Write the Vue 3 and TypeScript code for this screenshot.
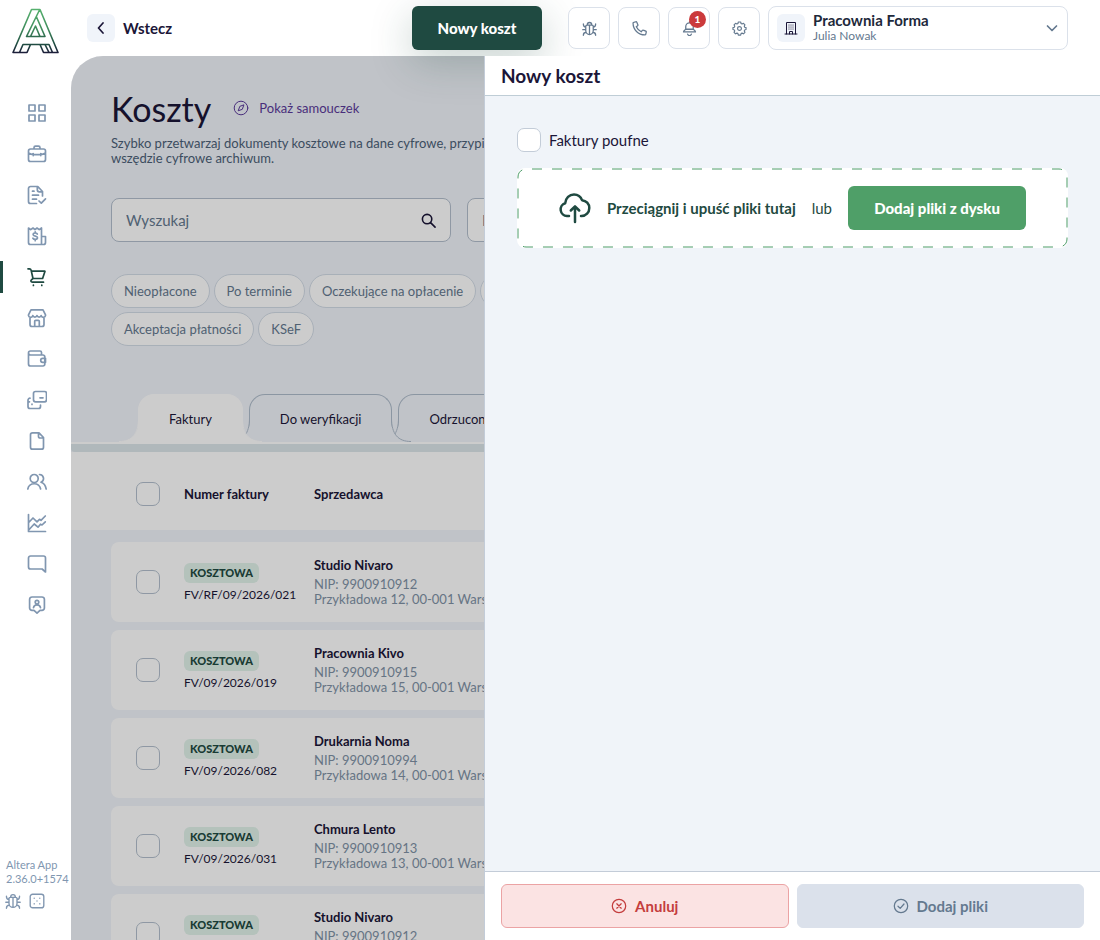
<script setup lang="ts">
import { ref } from 'vue'

interface NavItem { label: string; paths: string; active?: boolean }
interface Invoice { kind: string; number: string; seller: string; nip: string; address: string }

const navItems: NavItem[] = [
  { label: 'Pulpit', paths: 'M2 2h6v6H2z M12 2h6v6h-6z M2 12h6v6H2z M12 12h6v6h-6z' },
  { label: 'Firma', paths: 'M3.5 5h13a2 2 0 0 1 2 2v8.5a2 2 0 0 1-2 2h-13a2 2 0 0 1-2-2V7a2 2 0 0 1 2-2z M7 5V3.7a1.5 1.5 0 0 1 1.5-1.5h3A1.5 1.5 0 0 1 13 3.7V5 M1.5 9c2 1.4 4 1.6 5 1.6h7c1 0 3-.2 5-1.6 M6.2 9.6v2 M13.8 9.6v2' },
  { label: 'Dokumenty', paths: 'M15.5 11V6.5l-4.7-5H3.5a2 2 0 0 0-2 2v13a2 2 0 0 0 2 2H9.5 M10.3 1.8v3a2 2 0 0 0 2 2h3 M5.5 6.2h1.5 M5.5 10.2h6 M5.5 14.2h4 M12 16l2.3 2.2 4.2-4.4' },
  { label: 'Faktury', paths: 'M1.5 16.5V2l2.2 1.6L6 2l2 1.6L10 2l2.2 1.6L14.5 2v16.5h-11a2 2 0 0 1-2-2z M14.5 10.5h4v6a2 2 0 0 1-2 2h-2 M10.3 8c-.5-.8-1.2-1-2.2-1-1.2 0-2 .6-2 1.6 0 2.2 4.4 1 4.4 3.2 0 1-.9 1.6-2.2 1.6-1.1 0-1.9-.4-2.4-1.2 M8.2 5.8V7 M8.2 13.4v1.3' },
  { label: 'Koszty', active: true, paths: 'M1 1.8h1.4c.9 0 1.5.5 1.7 1.3L6 11.5h9.6L18 4.2H4.4 M6 11.5l-1.6 1.3c-1 .9-.5 2.4.9 2.4h11.2 M6.4 18.2v.2 M14.8 18.2v.2' },
  { label: 'Magazyn', paths: 'M4 1.8h12l2.5 5v.8a2.2 2.2 0 0 1-4.3 0 2.2 2.2 0 0 1-4.2 0 2.2 2.2 0 0 1-4.2 0 2.2 2.2 0 0 1-4.3 0v-.8z M3 10v6.5a2 2 0 0 0 2 2h10a2 2 0 0 0 2-2V10 M7.7 18.3v-5a1 1 0 0 1 1-1h2.6a1 1 0 0 1 1 1v5' },
  { label: 'Portfel', paths: 'M1.5 4v11a2 2 0 0 0 2 2H16a1.8 1.8 0 0 0 1.8-1.8V7.8A1.8 1.8 0 0 0 16 6H3.5a2 2 0 0 1 0-4H13a1.5 1.5 0 0 1 1.5 1.5V6 M18.5 9.3h-2.8a2 2 0 0 0 0 4h2.8z' },
  { label: 'Płatności', paths: 'M8.5 1.5h9a2 2 0 0 1 2 2v6.3a2 2 0 0 1-2 2h-9a2 2 0 0 1-2-2V3.5a2 2 0 0 1 2-2z M13 7.8h3 M3 8.2a2 2 0 0 0-2 2v6.3a2 2 0 0 0 2 2h8.5a2 2 0 0 0 2-2v-1.5 M1 11.8h1.5 M5 14.2v.2' },
  { label: 'Pliki', paths: 'M5.5 1.8H12l4.5 4.7v9.7a2 2 0 0 1-2 2h-9a2 2 0 0 1-2-2V3.8a2 2 0 0 1 2-2z M11.5 2v3.5A1.5 1.5 0 0 0 13 7h3.3' },
  { label: 'Kontrahenci', paths: 'M3.2 6.5a4 4 0 1 0 8 0 4 4 0 1 0-8 0 M.8 17a6.5 6.5 0 0 1 12.8 0 M12.5 2.5a4 4 0 0 1 1.5 7.7c2.6.8 4.6 3.2 5.2 6.8' },
  { label: 'Raporty', paths: 'M1.5 1.5v17h17 M1.7 9.5L6 5l4 3.8 2.5-2.5 1.5 1 4.3-4.3 M1.7 17l5.5-6 3.8 3.2 2.5-3 1.5.8 3.3-3.2' },
  { label: 'Wiadomości', paths: 'M3.5 2h13a2 2 0 0 1 2 2v14l-3.4-3H3.5a2 2 0 0 1-2-2V4a2 2 0 0 1 2-2z' },
  { label: 'Konto', paths: 'M5 2h10a2.4 2.4 0 0 1 2.4 2.4V13a2.4 2.4 0 0 1-2.4 2.4h-2L10 18.2l-3-2.8H5A2.4 2.4 0 0 1 2.6 13V4.4A2.4 2.4 0 0 1 5 2z M8.2 7.2a1.8 1.8 0 1 0 3.6 0 1.8 1.8 0 1 0-3.6 0 M6.5 12.6c.3-1.8 1.7-2.8 3.5-2.8s3.2 1 3.5 2.8' },
]

const bug = 'M6.5 5.5h7a1.500 1.500 0 0 1 1.500 1.500V13a5 5 0 0 1-10 0V7a1.500 1.500 0 0 1 1.500-1.500z M7 5.500a3 3.500 0 0 1 6 0 M10 6v12 M5 11.500H1 M19 11.500h-4 M5 8C2.500 8 1.800 7 1.800 4 M15 8C17.500 8 18.200 7 18.200 4 M5.500 15c-2.500.3-3.700 1-3.700 4 M14.500 15c2.500.3 3.700 1 3.700 4'
const gear = 'M8.300 1.500h3.400l.6 2.200 1.400.7 2.100-1 2.200 2.200-1 2.100.6 1.400 2 .6v2.800l-2 .6-.6 1.400 1 2.100-2.200 2.200-2.100-1-1.400.7-.6 2.200H8.300l-.6-2.200-1.400-.7-2.100 1L2 16.600l1-2.100-.6-1.400-2-.6V9.700l2-.6L3 7.700 2 5.600l2.200-2.200 2.100 1 1.400-.7z M7.200 11a2.800 2.800 0 1 0 5.600 0 2.800 2.800 0 1 0-5.600 0'

const chips = ['Nieopłacone', 'Po terminie', 'Oczekujące na opłacenie', 'Opłacone', 'Akceptacja płatności', 'KSeF']
const tabs = ['Faktury', 'Do weryfikacji', 'Odrzucone']
const activeTab = ref('Faktury')
const search = ref('')
const confidential = ref(false)

const invoices: Invoice[] = [
  { kind: 'KOSZTOWA', number: 'FV/RF/09/2026/021', seller: 'Studio Nivaro', nip: '9900910912', address: 'Przykładowa 12, 00-001 Warszawa' },
  { kind: 'KOSZTOWA', number: 'FV/09/2026/019', seller: 'Pracownia Kivo', nip: '9900910915', address: 'Przykładowa 15, 00-001 Warszawa' },
  { kind: 'KOSZTOWA', number: 'FV/09/2026/082', seller: 'Drukarnia Noma', nip: '9900910994', address: 'Przykładowa 14, 00-001 Warszawa' },
  { kind: 'KOSZTOWA', number: 'FV/09/2026/031', seller: 'Chmura Lento', nip: '9900910913', address: 'Przykładowa 13, 00-001 Warszawa' },
  { kind: 'KOSZTOWA', number: 'FV/09/2026/044', seller: 'Studio Nivaro', nip: '9900910912', address: 'Przykładowa 12, 00-001 Warszawa' },
]
</script>

<template>
  <div class="app">
    <aside class="sidebar">
      <svg class="logo" viewBox="0 0 47 46" aria-label="Altera" role="img">
        <defs>
          <linearGradient id="logoFill" x1="0" y1="0" x2="0" y2="46" gradientUnits="userSpaceOnUse">
            <stop offset="0" stop-color="#58b370" />
            <stop offset="0.45" stop-color="#3f8c5c" />
            <stop offset="0.8" stop-color="#1f4a41" />
            <stop offset="1" stop-color="#1b1638" />
          </linearGradient>
        </defs>
        <path
          d="M1 44.500L19.500 1.500h8.500L46 44.500H31.500L28 36.500H18.500L15 44.500z M27.500 2L14.500 28.500H33L24.500 9 M18.500 28.500L23.500 18 28 28.500 M18.500 36.500h-7.500L7.500 44.500 M28 36.500h9L40.500 44.500 M33 36.500l4 8"
          fill="none" stroke="url(#logoFill)" stroke-width="1.600" stroke-linejoin="round"
        />
      </svg>
      <nav class="nav" aria-label="Menu główne">
        <a v-for="item in navItems" :key="item.label" href="#" class="nav-link" :class="{ active: item.active }" :aria-label="item.label">
          <svg class="icon" viewBox="0 0 20 20"><path :d="item.paths" /></svg>
        </a>
      </nav>
      <div class="version">
        <span>Altera App</span>
        <span>2.36.0+1574</span>
        <div class="version-icons">
          <svg class="icon small" viewBox="0 0 20 20"><path :d="bug" /></svg>
          <svg class="icon small" viewBox="0 0 20 20"><path d="M4.500 1.500h11a3 3 0 0 1 3 3v11a3 3 0 0 1-3 3h-11a3 3 0 0 1-3-3v-11a3 3 0 0 1 3-3z M6.500 6.500v.1 M13.500 6.500v.1 M10 10v.1 M6.500 13.500v.1 M13.500 13.500v.1" /></svg>
        </div>
      </div>
    </aside>

    <header class="topbar">
      <button class="back" type="button">
        <span class="tile"><svg class="icon chevron" viewBox="0 0 12 12"><path d="M8 1L3.500 6 8 11" /></svg></span>
        Wstecz
      </button>
      <button class="new-cost" type="button">Nowy koszt</button>
      <div class="tools">
        <button class="tool" type="button" aria-label="Zgłoś błąd"><svg class="icon mid" viewBox="0 0 20 20"><path :d="bug" /></svg></button>
        <button class="tool" type="button" aria-label="Telefon">
          <svg class="icon mid" viewBox="0 0 20 20"><path d="M2.200 1.700l3-.7c.5-.1 1 .2 1.200.6l1.400 3.400c.2.500.1.900-.3 1.200L5.700 7.700c1.300 2.800 3.700 5.200 6.600 6.600l1.500-1.800c.3-.4.800-.5 1.200-.3l3.400 1.400c.5.200.7.700.6 1.200l-.7 3c-.1.500-.5.800-1 .8C8.300 18.600 1.400 11.700 1.400 2.700c0-.5.300-.9.800-1z" /></svg>
        </button>
        <button class="tool" type="button" aria-label="Powiadomienia">
          <svg class="icon mid" viewBox="0 0 20 20"><path d="M10 1v1.500 M5 10.500V7.500a5 5 0 0 1 10 0v3c0 1.200 3 2 3 4H2c0-2 3-2.800 3-4z M5 11h10 M7.500 17.500a2.600 2.600 0 0 0 5 0" /></svg>
          <span class="badge">1</span>
        </button>
        <button class="tool" type="button" aria-label="Ustawienia"><svg class="icon mid" viewBox="0 0 20 22"><path :d="gear" /></svg></button>
      </div>
      <button class="account" type="button">
        <span class="tile">
          <svg class="icon building" viewBox="0 0 14 14"><path d="M1 13h12 M2.500 13V1.500h9V13 M5.500 13v-2.500h3V13 M5 4v.1 M7 4v.1 M9 4v.1 M5 6v.1 M7 6v.1 M9 6v.1 M5 8v.1 M7 8v.1 M9 8v.1" /></svg>
        </span>
        <span class="account-text">
          <strong>Pracownia Forma</strong>
          <small>Julia Nowak</small>
        </span>
        <svg class="icon chevron" viewBox="0 0 12 12"><path d="M1.500 4L6 8.500 10.500 4" /></svg>
      </button>
    </header>

    <main class="main">
      <div class="intro">
        <div class="heading">
          <h1>Koszty</h1>
          <a href="#" class="tutorial">
            <svg class="icon compass" viewBox="0 0 16 16"><circle cx="8" cy="8" r="6.800" /><path d="M10.800 5.200L9.300 9.300 5.200 10.800l1.500-4.100z" /></svg>
            Pokaż samouczek
          </a>
        </div>
        <p class="lead">Szybko przetwarzaj dokumenty kosztowe na dane cyfrowe, przypisuj je i<br>wszędzie cyfrowe archiwum.</p>
        <div class="filters">
          <div class="search">
            <input v-model="search" type="search" placeholder="Wyszukaj" aria-label="Wyszukaj">
            <svg class="icon lens" viewBox="0 0 16 16"><circle cx="6.500" cy="6.500" r="5" /><path d="M10.200 10.200L15 15" /></svg>
          </div>
          <select class="category" aria-label="Kategoria"><option>Kategoria</option></select>
        </div>
        <div class="chips">
          <button v-for="chip in chips" :key="chip" class="chip" type="button">{{ chip }}</button>
        </div>
      </div>

      <div class="tabs" role="tablist">
        <button
          v-for="tab in tabs" :key="tab" type="button" role="tab" class="tab"
          :class="{ current: tab === activeTab }" :aria-selected="tab === activeTab" @click="activeTab = tab"
        >
          <svg class="flare left" viewBox="0 0 20 24"><path d="M20 0C20 16 13 23.500 0 23.500V24h20z" /><path class="edge" d="M19.500 0C19.500 16 13 23.500 0 23.500" /></svg>
          <span>{{ tab }}</span>
          <svg class="flare right" viewBox="0 0 20 24"><path d="M0 0C0 16 7 23.500 20 23.500V24H0z" /><path class="edge" d="M.5 0C.5 16 7 23.500 20 23.500" /></svg>
        </button>
      </div>
      <div class="track"></div>

      <table class="invoices">
        <thead>
          <tr>
            <th><input type="checkbox" class="check" aria-label="Zaznacz wszystkie"></th>
            <th>Numer faktury</th>
            <th>Sprzedawca</th>
          </tr>
        </thead>
        <tbody>
          <tr v-for="row in invoices" :key="row.number">
            <td><input type="checkbox" class="check" :aria-label="'Zaznacz ' + row.number"></td>
            <td>
              <span class="kind">{{ row.kind }}</span>
              <span class="number">{{ row.number }}</span>
            </td>
            <td class="seller">
              <strong>{{ row.seller }}</strong>
              <span>NIP: {{ row.nip }}</span>
              <span>{{ row.address }}</span>
            </td>
          </tr>
        </tbody>
      </table>
    </main>

    <section class="drawer" role="dialog" aria-labelledby="drawer-title">
      <h2 id="drawer-title">Nowy koszt</h2>
      <div class="drawer-body">
        <label class="confidential">
          <input v-model="confidential" type="checkbox" class="check">
          Faktury poufne
        </label>
        <div class="dropzone">
          <svg class="dashes" aria-hidden="true"><rect x="0" y="0" width="100%" height="100%" rx="8" /></svg>
          <svg class="icon cloud" viewBox="0 0 32 32"><path d="M10 24H8A6.500 6.500 0 0 1 6.200 11.300C6.500 6 10.500 2.500 15 2.500c4 0 6.800 2.300 8 5.700 4.300.4 7.300 3.700 7.300 7.800 0 4.500-3.300 8-7.800 8H22 M16 30V14.500 M11.800 18.500L16 14.300l4.200 4.200" /></svg>
          <strong>Przeciągnij i upuść pliki tutaj</strong>
          <span>lub</span>
          <button class="pick" type="button">Dodaj pliki z dysku</button>
        </div>
      </div>
      <footer class="actions">
        <button class="cancel" type="button">
          <svg class="icon round" viewBox="0 0 16 16"><circle cx="8" cy="8" r="6.700" /><path d="M5.800 5.800l4.400 4.400 M10.200 5.800l-4.400 4.400" /></svg>
          Anuluj
        </button>
        <button class="submit" type="button" disabled>
          <svg class="icon round" viewBox="0 0 16 16"><circle cx="8" cy="8" r="6.700" /><path d="M5 8.200l2.200 2.200L11 6" /></svg>
          Dodaj pliki
        </button>
      </footer>
    </section>
  </div>
</template>

<style>
body {
  margin: 0;
}
</style>

<style scoped>
.app {
  position: relative;
  display: grid;
  grid-template: 56px minmax(0, 1fr) / 71px minmax(0, 1fr);
  height: 100vh;
  overflow: hidden;
  background: #fff;
  color: #1b1638;
  font-family: Lato, "Open Sans", sans-serif;
  font-size: 14px;
}
.app * {
  box-sizing: border-box;
}
button, input, select {
  font: inherit;
  color: inherit;
}
button {
  padding: 0;
  border: 0;
  background: none;
  cursor: pointer;
}
a {
  color: inherit;
  text-decoration: none;
}
.icon {
  flex: none;
  width: 20px;
  height: 20px;
  fill: none;
  stroke: currentColor;
  stroke-width: 1.7;
  stroke-linecap: round;
  stroke-linejoin: round;
}
.tile {
  display: grid;
  place-items: center;
  width: 28px;
  height: 28px;
  border-radius: 6px;
  background: #f0f4fa;
}

/* sidebar */
.sidebar {
  grid-row: 1 / 3;
  display: flex;
  flex-direction: column;
  color: #8096b0;
}
.logo {
  width: 47px;
  height: 46px;
  margin: 8px 12px 0;
}
.nav {
  display: flex;
  flex-direction: column;
  gap: 9px;
  margin-top: 43px;
}
.nav-link {
  display: grid;
  place-items: center;
  height: 32px;
  border-left: 3px solid transparent;
}
.nav-link.active {
  border-color: #1f4a41;
  color: #1f4a41;
}
.version {
  display: flex;
  flex-direction: column;
  margin-top: auto;
  padding: 0 0 31px 6px;
  font-size: 11px;
  line-height: 14px;
}
.version-icons {
  display: flex;
  gap: 8px;
  margin-top: 7px;
  margin-left: -1px;
}
.small {
  width: 16px;
  height: 16px;
}

/* top bar */
.topbar {
  position: relative;
  z-index: 2;
  display: flex;
  align-items: center;
  padding: 0 32px 0 16px;
}
.back {
  display: flex;
  align-items: center;
  gap: 8px;
  margin-right: auto;
  font-size: 15px;
  font-weight: 700;
}
.chevron {
  width: 12px;
  height: 12px;
}
.new-cost {
  width: 130px;
  height: 44px;
  margin-right: 26px;
  border-radius: 6px;
  background: #1f4a41;
  box-shadow: 0 12px 40px rgba(31, 74, 65, 0.25);
  color: #fff;
  font-size: 15px;
  font-weight: 900;
}
.tools {
  display: flex;
  gap: 8px;
}
.tool {
  position: relative;
  display: grid;
  place-items: center;
  width: 42px;
  height: 42px;
  border: 1px solid #dbe1ea;
  border-radius: 8px;
  background: #fff;
  color: #64798f;
}
.mid {
  width: 15px;
  height: 15px;
}
.badge {
  position: absolute;
  top: 3px;
  right: 3px;
  width: 17px;
  height: 17px;
  border-radius: 50%;
  background: #cb3a3c;
  color: #fff;
  font-size: 10px;
  font-weight: 900;
  line-height: 17px;
}
.account {
  display: flex;
  align-items: center;
  gap: 8px;
  width: 300px;
  height: 44px;
  margin-left: 8px;
  padding: 0 9px 0 8px;
  border: 1px solid #dbe1ea;
  border-radius: 8px;
  background: #fff;
  text-align: left;
}
.building {
  width: 14px;
  height: 14px;
  stroke-width: 1;
}
.account-text {
  display: flex;
  flex: 1;
  flex-direction: column;
  line-height: 16px;
}
.account-text strong {
  font-size: 15px;
  color: #1e293b;
}
.account-text small {
  font-size: 12px;
  color: #64798f;
}
.account .chevron {
  color: #64798f;
}

/* main area, dimmed while the drawer is open */
.main {
  position: relative;
  isolation: isolate;
  overflow: hidden;
  border-radius: 32px 0 0 0;
  background: #f1f4fa;
}
.main::after {
  content: "";
  position: absolute;
  inset: 0;
  z-index: 5;
  background: rgba(0, 0, 0, 0.2);
}
.intro {
  padding: 32px 40px 0;
}
.heading {
  display: flex;
  align-items: center;
  gap: 22px;
  height: 40px;
}
h1 {
  margin: 0;
  font-size: 34px;
  font-weight: 400;
}
.tutorial {
  display: flex;
  align-items: center;
  gap: 10px;
  color: #5b3a9b;
  font-size: 13px;
}
.compass {
  width: 16px;
  height: 16px;
  stroke-width: 1;
}
.lead {
  margin: 8px 0 0;
  color: #4c6178;
  font-size: 13px;
  line-height: 15px;
  white-space: nowrap;
}
.filters {
  display: flex;
  gap: 16px;
  margin-top: 32px;
}
.search {
  display: flex;
  align-items: center;
  width: 340px;
  height: 44px;
  padding: 0 14px;
  border: 1px solid #b3bfcd;
  border-radius: 8px;
  background: #fff;
}
.search input {
  flex: 1;
  min-width: 0;
  padding: 0;
  border: 0;
  outline: 0;
  background: none;
  font-size: 15px;
}
.search input::placeholder {
  color: #64798f;
  opacity: 1;
}
.lens {
  width: 15px;
  height: 15px;
}
.category {
  width: 220px;
  height: 44px;
  padding: 0 14px;
  border: 1px solid #b3bfcd;
  border-radius: 8px;
  background: #fff;
  color: #64798f;
  font-size: 15px;
  appearance: none;
}
.chips {
  display: flex;
  flex-wrap: wrap;
  gap: 4px;
  width: 50%;
  margin-top: 32px;
}
.chip {
  height: 34px;
  padding: 0 12px;
  border: 1px solid #d3dce7;
  border-radius: 17px;
  background: #fff;
  color: #64798f;
  font-size: 13px;
}

/* tabs */
.tabs {
  display: flex;
  gap: 6px;
  margin-top: 48px;
  padding-left: 67px;
}
.tab {
  position: relative;
  z-index: 1;
  height: 48px;
  padding: 0 30px;
  border: 1px solid #aebccb;
  border-bottom: 0;
  border-radius: 16px 16px 0 0;
  background: #f1f4fa;
  font-size: 13px;
}
.tab:nth-child(1) {
  z-index: 3;
}
.tab:nth-child(2) {
  z-index: 2;
}
.tab.current {
  border-color: #fff;
  background: #fff;
}
.flare {
  position: absolute;
  bottom: 0;
  width: 20px;
  height: 24px;
  fill: #f1f4fa;
}
.flare.left {
  right: 100%;
}
.flare.right {
  left: 100%;
}
.edge {
  fill: none;
  stroke: #aebccb;
}
.current .flare {
  fill: #fff;
}
.current .edge {
  stroke: #fff;
}
.track {
  height: 10px;
  border-top: 2px solid #fff;
  border-radius: 0 0 0 4px;
  background: #dce6ea;
}

/* invoices */
.invoices {
  display: block;
  font-size: 13px;
}
thead, tbody {
  display: block;
}
tr {
  display: grid;
  grid-template-columns: 48px 130px minmax(0, 1fr);
  align-items: center;
}
th, td {
  padding: 0;
  text-align: left;
}
thead {
  padding: 0 65px;
  background: #fff;
}
thead tr {
  height: 78px;
  padding-top: 6px;
}
tbody {
  display: grid;
  gap: 8px;
  padding: 12px 40px;
}
tbody tr {
  height: 80px;
  padding: 0 25px;
  border-radius: 8px;
  background: #fff;
}
.check {
  display: block;
  width: 24px;
  height: 24px;
  margin: 0;
  border: 1px solid #b3bfcd;
  border-radius: 7px;
  background: #fff;
  appearance: none;
}
.check:checked {
  background: #1f4a41;
}
.kind {
  display: block;
  width: fit-content;
  margin: 2px 0 4px;
  padding: 0 6px;
  border-radius: 6px;
  background: #e1f3ea;
  color: #1f4a41;
  font-size: 11px;
  font-weight: 900;
  line-height: 20px;
}
.number {
  display: block;
  font-size: 12px;
  line-height: 16px;
}
.seller {
  color: #8092a6;
  line-height: 15px;
  white-space: nowrap;
}
.seller strong {
  display: block;
  margin-bottom: 4px;
  color: #1b1638;
}
.seller span {
  display: block;
}

/* drawer */
.drawer {
  position: absolute;
  z-index: 3;
  top: 56px;
  right: 0;
  bottom: 0;
  display: flex;
  flex-direction: column;
  width: 56%;
  border-left: 1px solid #c3ccd8;
  background: #f0f4f9;
}
h2 {
  margin: 0;
  padding: 0 16px;
  border-bottom: 1px solid #bfcdd6;
  background: #fff;
  font-size: 19px;
  line-height: 39px;
}
.drawer-body {
  flex: 1;
  padding: 32px;
}
.drawer .check {
  border-color: #c3ccd8;
}
.confidential {
  display: flex;
  align-items: center;
  gap: 8px;
  width: fit-content;
  font-size: 15px;
}
.dropzone {
  position: relative;
  display: flex;
  align-items: center;
  justify-content: center;
  gap: 16px;
  height: 80px;
  margin-top: 16px;
  border-radius: 8px;
  background: #fff;
  color: #1f4a41;
  font-size: 15px;
}
.dashes {
  position: absolute;
  top: 1px;
  left: 1px;
  width: calc(100% - 2px);
  height: calc(100% - 2px);
  overflow: visible;
  fill: none;
  stroke: #4c9c68;
  stroke-dasharray: 10 10;
  stroke-dashoffset: -6;
}
.cloud {
  width: 32px;
  height: 32px;
  stroke-width: 2.5;
}
.pick {
  position: relative;
  width: 178px;
  height: 44px;
  border-radius: 6px;
  background: #4f9f68;
  color: #fff;
  font-weight: 900;
}
.actions {
  display: flex;
  gap: 8px;
  padding: 12px 16px;
  border-top: 1px solid #c3ccd8;
  background: #fff;
}
.actions button {
  display: flex;
  flex: 1 1 0;
  align-items: center;
  justify-content: center;
  gap: 8px;
  height: 44px;
  border: 1px solid transparent;
  border-radius: 6px;
  font-size: 15px;
  font-weight: 700;
}
.round {
  width: 16px;
  height: 16px;
  stroke-width: 1.25;
}
.actions .cancel {
  border-color: #eba3a4;
  background: #fbe3e3;
  color: #c43d3d;
}
.actions .submit {
  border-color: #dbe1eb;
  background: #dbe1eb;
  color: #64798f;
}
</style>
